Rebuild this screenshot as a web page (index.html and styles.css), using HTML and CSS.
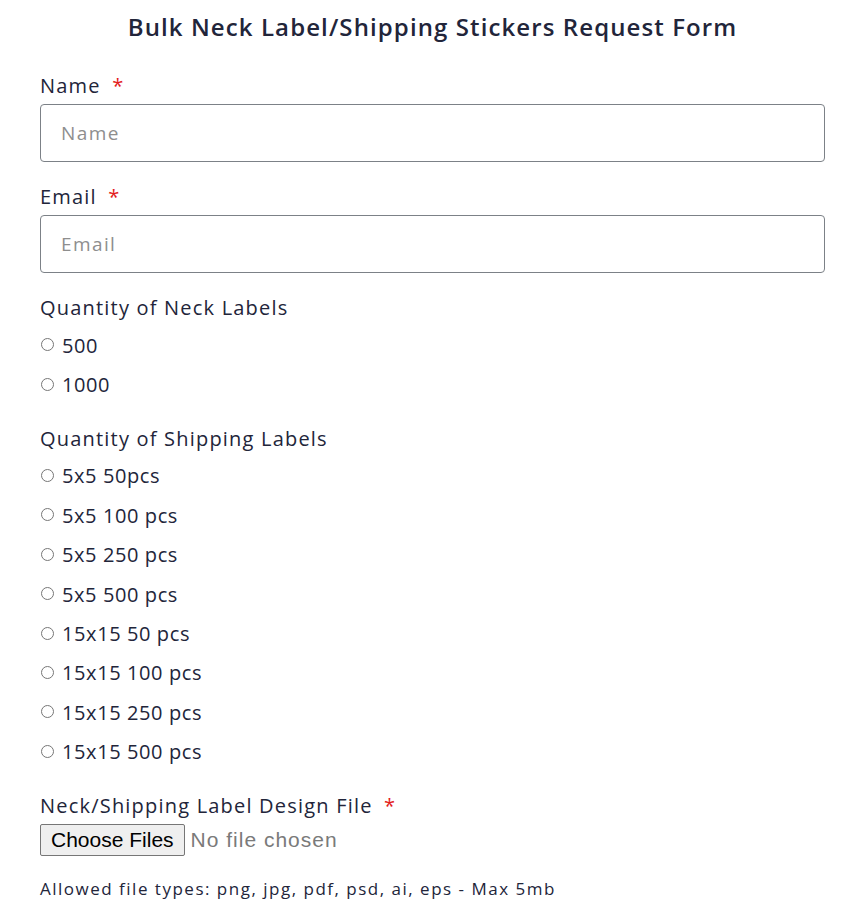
FILE: index.html
```html
<!DOCTYPE html>
<html lang="en">
<head>
<meta charset="utf-8">
<title>Bulk Neck Label/Shipping Stickers Request Form</title>
<link rel="stylesheet" href="styles.css">
</head>
<body>
<form class="form">
  <h1 class="title">Bulk Neck Label/Shipping Stickers Request Form</h1>

  <div class="field">
    <label class="label" for="name">Name <span class="req">*</span></label>
    <input class="input" id="name" type="text" placeholder="Name">
  </div>

  <div class="field">
    <label class="label" for="email">Email <span class="req">*</span></label>
    <input class="input" id="email" type="email" placeholder="Email">
  </div>

  <div class="field">
    <div class="label">Quantity of Neck Labels</div>
    <div class="options">
      <label class="option"><input type="radio" name="neck" class="radio"><span>500</span></label>
      <label class="option"><input type="radio" name="neck" class="radio"><span>1000</span></label>
    </div>
  </div>

  <div class="field">
    <div class="label">Quantity of Shipping Labels</div>
    <div class="options">
      <label class="option"><input type="radio" name="ship" class="radio"><span>5x5 50pcs</span></label>
      <label class="option"><input type="radio" name="ship" class="radio"><span>5x5 100 pcs</span></label>
      <label class="option"><input type="radio" name="ship" class="radio"><span>5x5 250 pcs</span></label>
      <label class="option"><input type="radio" name="ship" class="radio"><span>5x5 500 pcs</span></label>
      <label class="option"><input type="radio" name="ship" class="radio"><span>15x15 50 pcs</span></label>
      <label class="option"><input type="radio" name="ship" class="radio"><span>15x15 100 pcs</span></label>
      <label class="option"><input type="radio" name="ship" class="radio"><span>15x15 250 pcs</span></label>
      <label class="option"><input type="radio" name="ship" class="radio"><span>15x15 500 pcs</span></label>
    </div>
  </div>

  <div class="field">
    <label class="label" for="file">Neck/Shipping Label Design File <span class="req">*</span></label>
    <input class="file" id="file" type="file" multiple>
    <p class="hint">Allowed file types: png, jpg, pdf, psd, ai, eps - Max 5mb</p>
  </div>
</form>
</body>
</html>
```

FILE: styles.css
```css
html, body {
  margin: 0;
  padding: 0;
  background: #ffffff;
}

body {
  font-family: "Open Sans", "Liberation Sans", sans-serif;
  color: #22253a;
}

.form {
  display: flex;
  flex-direction: column;
  gap: 18px;
  padding: 10px 42px 0 40px;
}

.title {
  margin: 0 0 7px;
  text-align: center;
  font-size: 24px;
  line-height: 34px;
  font-weight: 600;
  letter-spacing: 1.1px;
  color: #22253a;
}

.field {
  display: flex;
  flex-direction: column;
}

.label {
  font-size: 20px;
  line-height: 30px;
  letter-spacing: 1.2px;
  padding-top: 2px;
  margin-bottom: 3px;
  color: #22253a;
}

.req {
  color: #e31b1b;
  margin-left: 5px;
}

.input {
  box-sizing: border-box;
  height: 58px;
  width: 100%;
  border: 1px solid #7c8187;
  border-radius: 4px;
  padding: 0 20px;
  font-family: inherit;
  font-size: 19px;
  letter-spacing: 1.4px;
  color: #22253a;
  background: #fff;
}

.input::placeholder {
  color: #8e8e8e;
}

.options {
  display: flex;
  flex-direction: column;
  margin-top: -1px;
}

.option {
  display: flex;
  align-items: center;
  height: 39.4px;
  font-size: 20px;
  letter-spacing: 0.6px;
}

.option span {
  padding-top: 1px;
}

.radio {
  margin: 0 8px 0 1px;
  width: 13px;
  height: 13px;
}

.file {
  align-self: flex-start;
  font-family: "Liberation Sans", Arial, sans-serif;
  font-size: 21px;
  letter-spacing: 1px;
  color: #7a7a7a;
  margin: 0;
}

.file::file-selector-button {
  font-family: "Liberation Sans", Arial, sans-serif;
  font-size: 21px;
  letter-spacing: 0;
  color: #000;
  background: #efefef;
  border: 1px solid #767676;
  border-radius: 2px;
  padding: 3px 10px;
  margin: 0 6px 0 0;
}

.hint {
  margin: 22px 0 0;
  font-size: 17px;
  line-height: 22px;
  letter-spacing: 1.5px;
  color: #22253a;
}
```
